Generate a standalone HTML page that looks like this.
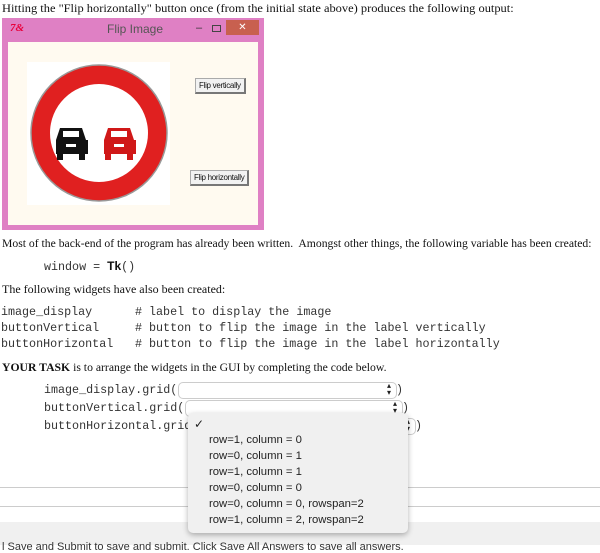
<!DOCTYPE html>
<html><head><style>
body{margin:0;width:600px;height:545px;overflow:hidden;background:#fff;position:relative;font-family:"Liberation Serif",serif;font-size:12px;color:#111}
.a{position:absolute;white-space:nowrap;transform-origin:0 0}
.m{font-family:"Liberation Mono",monospace;font-size:11.7px;color:#333}
.sel{position:absolute;height:15px;border:1px solid #ccc;border-radius:5px;background:#fff}
.sel:after{content:"▴";position:absolute;right:5px;top:-2px;font-size:8px;color:#222;font-family:"DejaVu Sans",sans-serif;line-height:10px}
.sel:before{content:"▾";position:absolute;right:5px;top:5px;font-size:8px;color:#222;font-family:"DejaVu Sans",sans-serif;line-height:10px}
.dd{position:absolute;left:188px;top:413px;width:220px;height:120px;background:#f0f0f0;border-radius:5px;box-shadow:0 2px 6px rgba(0,0,0,.3);font-family:"Liberation Sans",sans-serif;font-size:11.3px;color:#222}
.dd div{position:absolute;left:21px}
.btn{position:absolute;background:#f2f2f2;border:1px solid #aaa;border-right:2px solid #777;border-bottom:2px solid #777;font-family:"Liberation Sans",sans-serif;font-size:8px;padding:2px 3px;letter-spacing:-.3px}
</style></head><body>
<div class="a" style="left:2px;top:1px;transform:scaleX(1.035)">Hitting the "Flip horizontally" button once (from the initial state above) produces the following output:</div>
<div class="a" style="left:2px;top:18px;width:262px;height:212px;background:#df80c4"></div>
<div class="a" style="left:226px;top:20px;width:33px;height:15px;background:#c8604f;color:#fff;font-family:'Liberation Sans';font-size:10px;text-align:center;line-height:15px">✕</div>
<div class="a" style="left:10px;top:22px;color:#e8003a;font-size:11px;font-weight:bold;font-style:italic">7&amp;</div>
<div class="a" style="left:107px;top:22px;font-family:'Liberation Sans';font-size:12px;color:#555">Flip Image</div>
<div class="a" style="left:196px;top:22px;font-family:'Liberation Sans';font-size:11px;color:#333">–</div>
<div class="a" style="left:212px;top:25px;width:7px;height:5px;border:1px solid #444"></div>
<div class="a" style="left:8px;top:42px;width:250px;height:183px;background:#fffaf0"></div>
<div class="a" style="left:27px;top:62px;width:143px;height:143px;background:#fff"></div>
<svg class="a" style="left:28px;top:62px" width="142" height="142" viewBox="0 0 142 142">
<circle cx="71" cy="71" r="68" fill="#e02020" stroke="#999" stroke-width="1.5"/>
<circle cx="71" cy="71" r="49" fill="#fff"/>
<g fill="#111"><path d="M28 78l4-12h22l4 12h2v14h-32v-14z"/><rect x="29" y="92" width="6" height="6"/><rect x="51" y="92" width="6" height="6"/></g>
<rect x="35" y="69" width="16" height="6" fill="#fff"/><rect x="38" y="82" width="10" height="3" fill="#fff"/>
<g fill="#d01818"><path d="M76 78l4-12h22l4 12h2v14h-32v-14z"/><rect x="77" y="92" width="6" height="6"/><rect x="99" y="92" width="6" height="6"/></g>
<rect x="83" y="69" width="16" height="6" fill="#fff"/><rect x="86" y="82" width="10" height="3" fill="#fff"/>
</svg>
<div class="btn" style="left:195px;top:78px">Flip vertically</div>
<div class="btn" style="left:190px;top:170px">Flip horizontally</div>
<div class="a" style="left:2px;top:236px;transform:scaleX(0.972)">Most of the back-end of the program has already been written.&nbsp; Amongst other things, the following variable has been created:</div>
<div class="a m" style="left:44px;top:259px">window = <b style="font-family:'Liberation Sans';font-size:12px;color:#111">Tk</b>()</div>
<div class="a" style="left:2px;top:282px">The following widgets have also been created:</div>
<div class="a m" style="left:1px;top:305px">image_display</div><div class="a m" style="left:135px;top:305px"># label to display the image</div>
<div class="a m" style="left:1px;top:321px">buttonVertical</div><div class="a m" style="left:135px;top:321px"># button to flip the image in the label vertically</div>
<div class="a m" style="left:1px;top:337px">buttonHorizontal</div><div class="a m" style="left:135px;top:337px"># button to flip the image in the label horizontally</div>
<div class="a" style="left:2px;top:360px;transform:scaleX(0.975)"><b>YOUR TASK</b> is to arrange the widgets in the GUI by completing the code below.</div>
<div class="a m" style="left:44px;top:383px">image_display.grid(</div><div class="sel" style="left:178px;top:382px;width:217px"></div><div class="a m" style="left:396px;top:383px">)</div>
<div class="a m" style="left:44px;top:401px">buttonVertical.grid(</div><div class="sel" style="left:185px;top:400px;width:216px"></div><div class="a m" style="left:402px;top:401px">)</div>
<div class="a m" style="left:44px;top:419px">buttonHorizontal.grid(</div><div class="sel" style="left:199px;top:418px;width:215px"></div><div class="a m" style="left:415px;top:419px">)</div>
<div class="a" style="left:0;top:487px;width:600px;height:1px;background:#ccc"></div>
<div class="a" style="left:0;top:506px;width:600px;height:1px;background:#ccc"></div>
<div class="a" style="left:0;top:522px;width:600px;height:23px;background:#f0f0f0"></div>
<div class="a" style="left:2px;top:541px;font-family:'Liberation Sans';font-size:11px;color:#333">l Save and Submit to save and submit. Click Save All Answers to save all answers.</div>
<div class="dd">
<div style="left:6px;top:4px;font-size:12px">✓</div>
<div style="top:21px">row=1, column = 0</div>
<div style="top:37px">row=0, column = 1</div>
<div style="top:53px">row=1, column = 1</div>
<div style="top:69px">row=0, column = 0</div>
<div style="top:85px">row=0, column = 0, rowspan=2</div>
<div style="top:101px">row=1, column = 2, rowspan=2</div>
</div>
</body></html>
